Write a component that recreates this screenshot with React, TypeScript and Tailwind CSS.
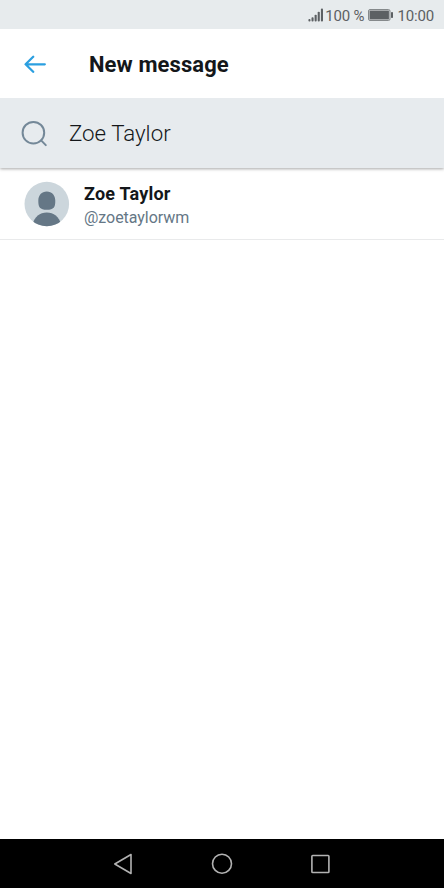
function StatusBar() {
  return (
    <div className="flex h-[29px] shrink-0 items-center justify-end bg-[#e7ebed] pr-[10px] pt-[2px] text-[15px] leading-[18px] tracking-[-0.15px] text-[#5c6063]">
      <svg className="mr-px mb-[2px] h-[14px] w-[16px]" viewBox="0 0 16 14" fill="#5c6063">
        <rect x="0.4" y="11" width="2.1" height="2.5" rx="0.9" />
        <rect x="3.5" y="9.2" width="2.1" height="4.3" rx="0.9" />
        <rect x="6.6" y="6.7" width="2.1" height="6.8" rx="0.9" />
        <rect x="9.7" y="3.7" width="2.1" height="9.8" rx="0.9" />
        <rect x="12.9" y="0.5" width="2.1" height="13" rx="0.9" />
      </svg>
      <span className="whitespace-nowrap">100 %</span>
      <svg className="mb-px ml-[4px] mr-[3px] h-[12px] w-[26px]" viewBox="0 0 26 12">
        <rect x="0.5" y="0.5" width="21.5" height="11" rx="1.5" fill="#d5d9db" stroke="#85898b" />
        <rect x="1.6" y="1.6" width="19.3" height="8.8" fill="#5c6063" />
        <rect x="23" y="3" width="2" height="6" rx="0.8" fill="#5c6063" />
      </svg>
      <span className="whitespace-nowrap">10:00</span>
    </div>
  );
}

function Header() {
  return (
    <header className="z-20 flex h-[69px] shrink-0 items-center bg-white pl-[24px]">
      <svg
        className="h-[18px] w-[22px]"
        viewBox="0 0 22 18"
        fill="none"
        stroke="#2b9fe0"
        strokeWidth="2.3"
        strokeLinecap="round"
        strokeLinejoin="round"
      >
        <path d="M20.8 9.3H1.8M9.2 1.8L1.6 9.3l7.6 7.5" />
      </svg>
      <h1 className="ml-[43px] whitespace-nowrap pt-[2px] text-[22px] font-bold leading-[28px] tracking-[0.09px] text-[#14171a]">
        New message
      </h1>
    </header>
  );
}

function SearchField() {
  return (
    <div className="z-10 flex h-[70px] shrink-0 items-center bg-[#e7ebee] pl-[21px] shadow-[0_1px_3px_rgba(0,0,0,0.35)]">
      <svg
        className="h-[27px] w-[27px]"
        viewBox="0 0 27 27"
        fill="none"
        stroke="#748898"
        strokeWidth="2"
        strokeLinecap="round"
      >
        <circle cx="12.4" cy="12.7" r="10.8" />
        <path d="M20.1 20.4l4.7 4.7" />
      </svg>
      <span className="ml-[21px] whitespace-nowrap text-[22.3px] font-light leading-[30px] text-[#14171a]">
        Zoe Taylor
      </span>
    </div>
  );
}

function UserRow() {
  return (
    <div className="flex h-[72px] shrink-0 items-center border-b border-[#e9eaeb] bg-white pl-[24px]">
      <svg className="h-[46px] w-[46px]" viewBox="0 0 46 46">
        <defs>
          <clipPath id="avatar">
            <circle cx="22.8" cy="23" r="22.3" />
          </clipPath>
        </defs>
        <circle cx="22.8" cy="23" r="22.3" fill="#ccd6dc" />
        <g clipPath="url(#avatar)" fill="#657786">
          <path d="M22.8 10.5c5.2 0 8.5 3.8 8.5 9.3 0 6.5-1.5 9-8.5 9s-8.5-2.5-8.5-9c0-5.5 3.3-9.3 8.5-9.3z" />
          <path d="M8.5 43c2.2-7.2 7.2-11.5 14.3-11.5S34.9 35.8 37.1 43v3H8.5z" />
        </g>
      </svg>
      <div className="ml-[14px] flex flex-col pt-[2px]">
        <span className="whitespace-nowrap text-[18px] font-bold leading-[24px] tracking-[0.2px] text-[#14171a]">Zoe Taylor</span>
        <span className="mt-px -mb-px whitespace-nowrap text-[16px] leading-[22px] tracking-[-0.05px] text-[#657786]">@zoetaylorwm</span>
      </div>
    </div>
  );
}

function NavigationBar() {
  return (
    <nav className="flex h-[49px] shrink-0 items-center justify-between bg-black pl-[112px] pr-[113px]">
      <svg className="h-[22px] w-[22px]" viewBox="0 0 22 22" fill="none" stroke="#b2b2b2" strokeWidth="1.6" strokeLinejoin="round">
        <path d="M19 1.5V20.5L2.8 11z" />
      </svg>
      <svg className="h-[22px] w-[22px]" viewBox="0 0 22 22" fill="none" stroke="#b2b2b2" strokeWidth="1.6">
        <circle cx="11" cy="10.7" r="9.5" />
      </svg>
      <svg className="h-[22px] w-[22px]" viewBox="0 0 22 22" fill="none" stroke="#b2b2b2" strokeWidth="1.6">
        <rect x="2.9" y="2.5" width="17" height="17" rx="0.8" />
      </svg>
    </nav>
  );
}

export default function App() {
  return (
    <div className="flex h-[888px] w-[444px] flex-col overflow-hidden bg-white font-['Roboto',sans-serif]">
      <StatusBar />
      <Header />
      <SearchField />
      <UserRow />
      <main className="flex-1 bg-white" />
      <NavigationBar />
    </div>
  );
}
